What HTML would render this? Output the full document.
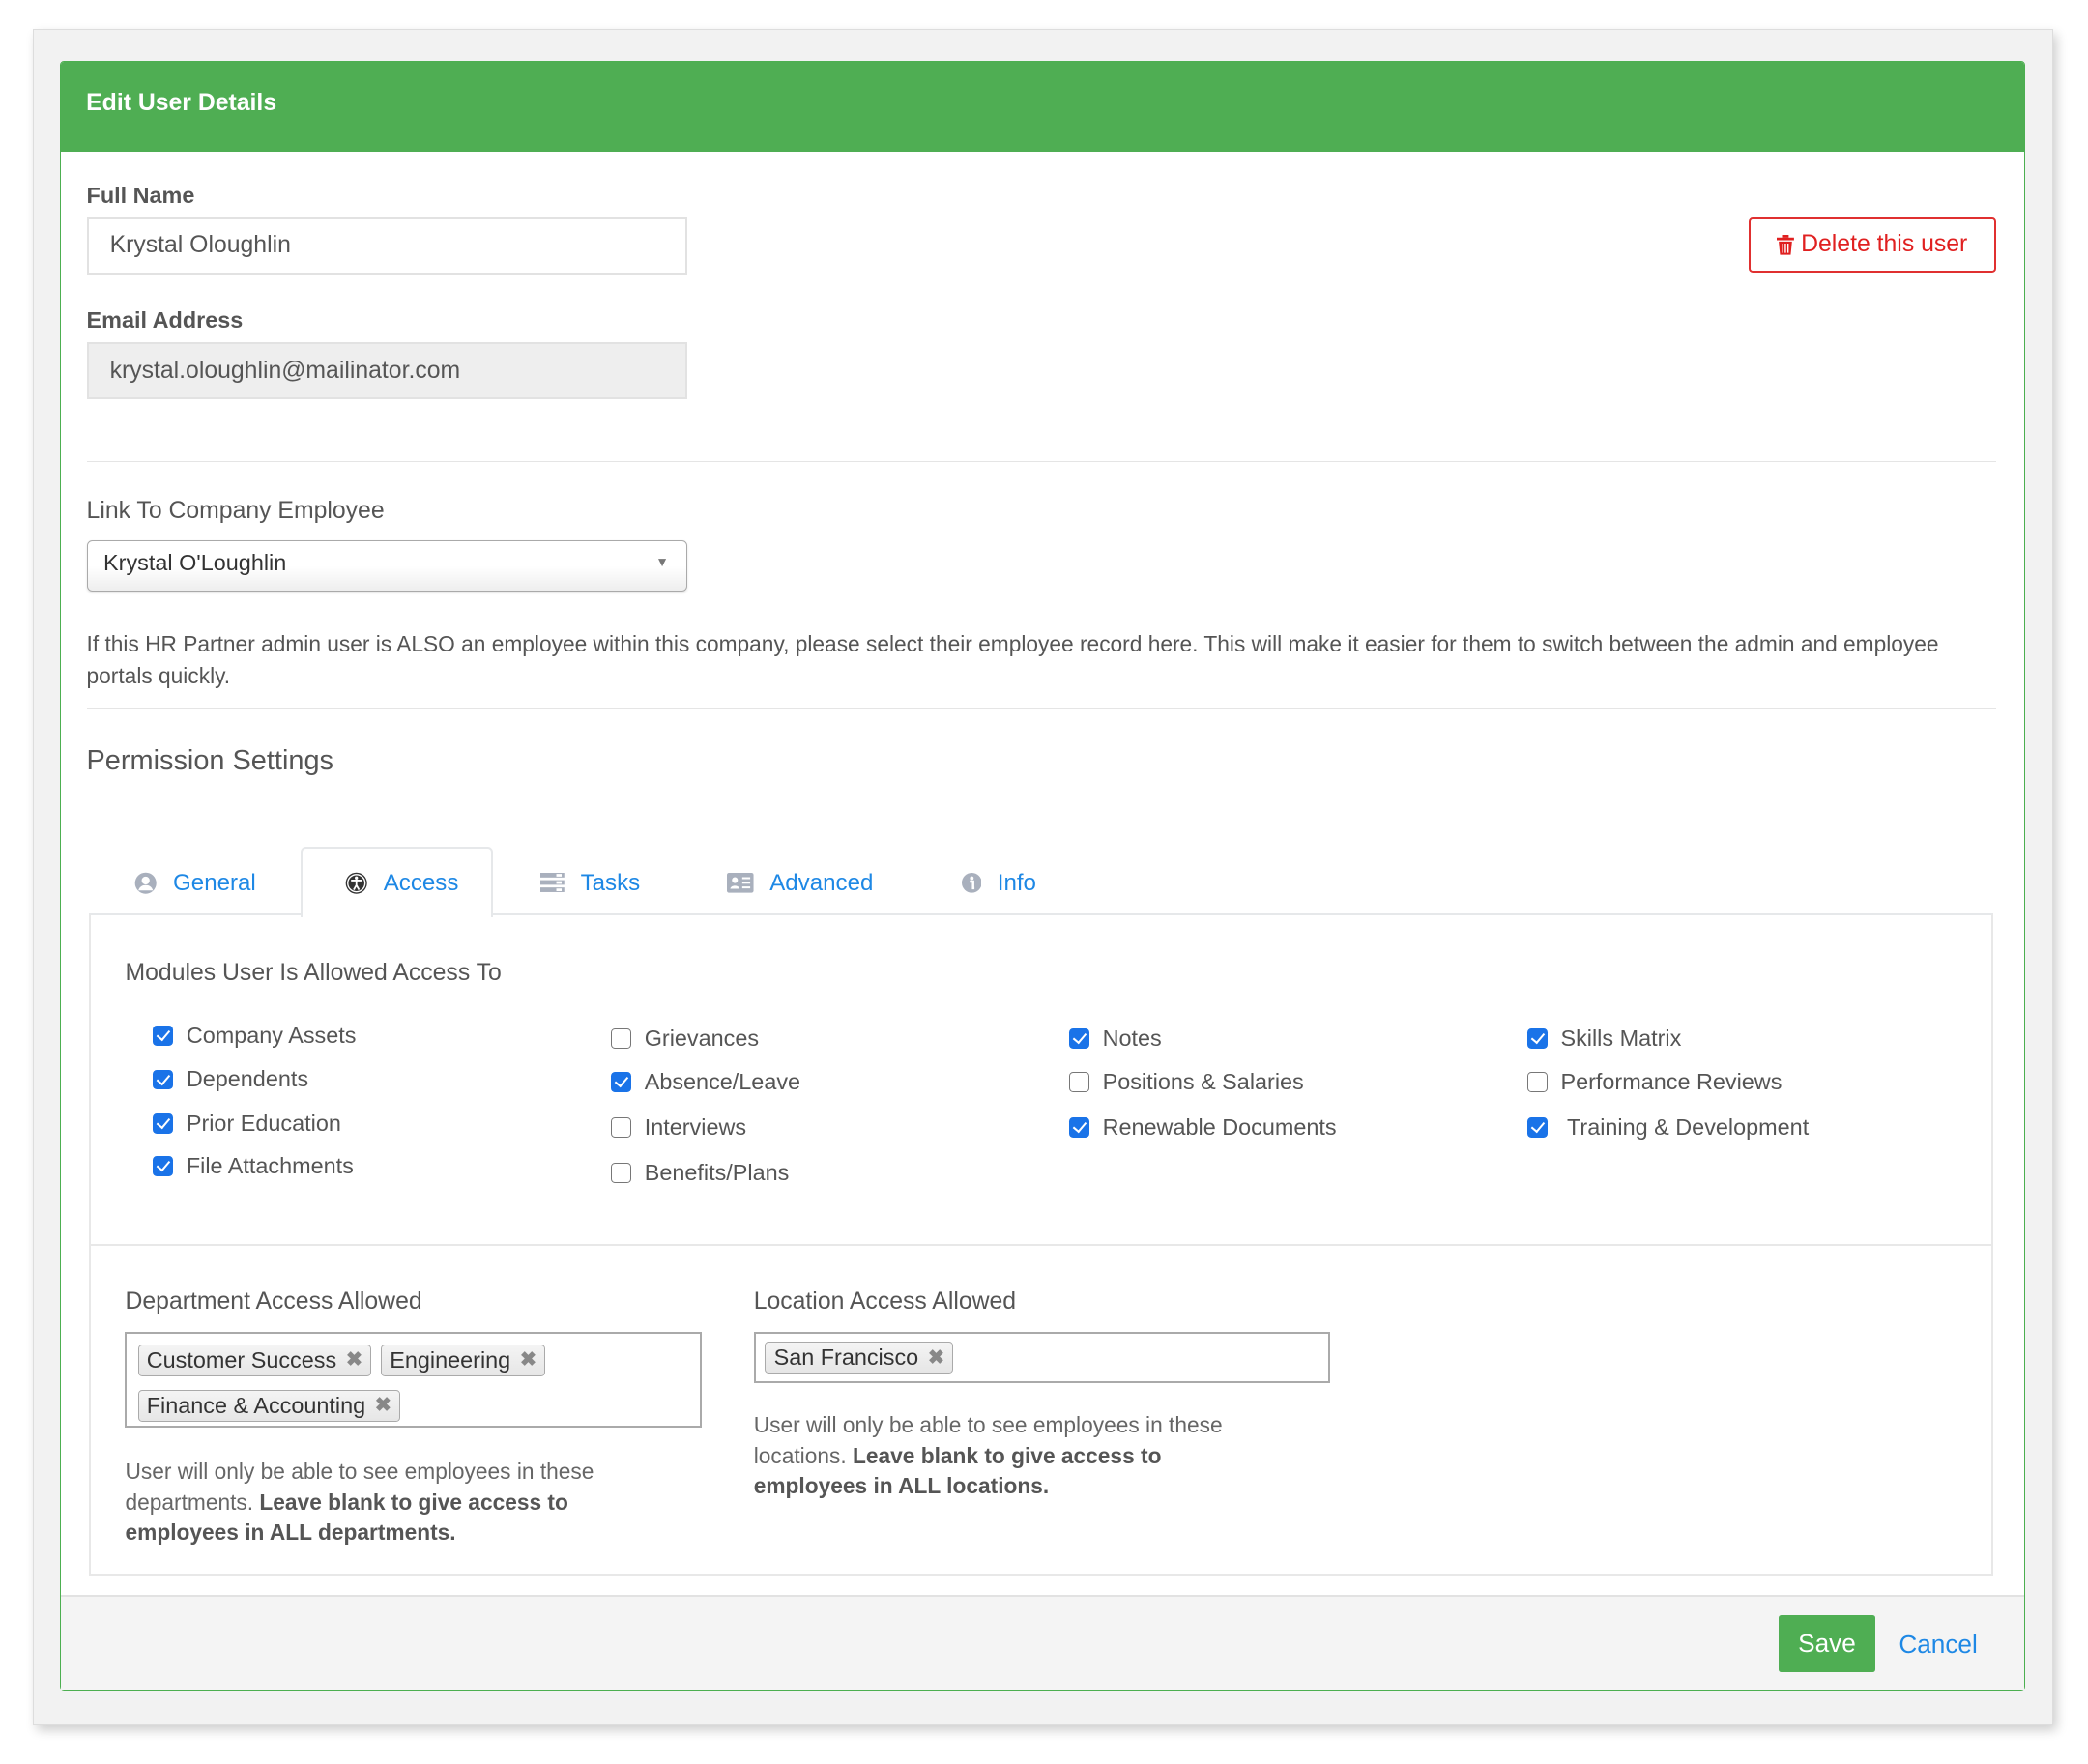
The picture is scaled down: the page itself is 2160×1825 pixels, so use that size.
<!DOCTYPE html>
<html><head><meta charset="utf-8"><style>
*{box-sizing:border-box;margin:0;padding:0}
html,body{width:2160px;height:1825px;background:#fff;overflow:hidden}
#w{zoom:1.37755;width:1568px;height:1325px;position:relative;font-family:"Liberation Sans",sans-serif;color:#555}
.a{position:absolute}
.lbl{font-weight:bold;font-size:17px;color:#555;position:absolute}
.inp{position:absolute;border:1.5px solid #e2e2e2;font-size:18px;color:#555;padding-left:16px;display:flex;align-items:center}
.cb{position:absolute;font-size:17px;color:#555;display:flex;align-items:center;white-space:nowrap}
.cb i{display:inline-block;width:15px;height:15px;border-radius:3px;margin-right:10px;flex:none}
.on{background:#1a73e8;position:relative}
.on:after{content:"";position:absolute;left:5px;top:1.5px;width:4px;height:8px;border:solid #fff;border-width:0 2px 2px 0;transform:rotate(40deg)}
.off{border:1.3px solid #777;background:#fff}
.tab{position:absolute;top:653px;font-size:17.5px;color:#1e88e5;display:flex;align-items:center;gap:12px}
.tag{display:inline-flex;align-items:center;height:24px;padding:0 6px;border:1px solid #aaa;border-radius:3px;background:linear-gradient(#f4f4f4,#e6e6e6);font-size:17px;color:#333;margin-right:7px}
.tag b{color:#888;margin-left:7px;font-size:15px}
.help{position:absolute;font-size:16.5px;line-height:23px;color:#666}
.help strong{color:#555}
</style></head><body><div id="w">
<div class="a" style="left:25px;top:22px;width:1517px;height:1274px;background:#f2f2f2;border:1px solid #ddd;box-shadow:3px 4px 8px rgba(0,0,0,.2)"></div>
<div class="a" style="left:45px;top:46px;width:1476px;height:1224px;background:#fff;border:1px solid #4caf50;border-radius:3px;overflow:hidden">
 <div class="a" style="left:0;top:0;width:100%;height:67px;background:#4fae53;color:#fff;font-weight:bold;font-size:18px;padding:21px 0 0 19px">Edit User Details</div>
</div>
<div class="lbl" style="left:65px;top:137px">Full Name</div>
<div class="inp" style="left:65px;top:163px;width:451px;height:43px">Krystal Oloughlin</div>
<div class="a" style="left:1313px;top:163px;width:186px;height:42px;border:1.5px solid #e03030;border-radius:3px;color:#e02020;font-size:18px;display:flex;align-items:center;justify-content:center;gap:5px">
<svg width="13" height="15" viewBox="0 0 13 15"><rect x="0" y="2" width="13" height="2" fill="#e02020"/><rect x="4" y="0" width="5" height="2" fill="#e02020"/><path d="M1.5 5h10l-1 10h-8z" fill="#e02020"/><path d="M4.5 6.5v7M6.5 6.5v7M8.5 6.5v7" stroke="#fff" stroke-width="1"/></svg>Delete this user</div>
<div class="lbl" style="left:65px;top:231px">Email Address</div>
<div class="inp" style="left:65px;top:257px;width:451px;height:43px;background:#eee">krystal.oloughlin@mailinator.com</div>
<div class="a" style="left:65px;top:346px;width:1434px;height:1px;background:#e5e5e5"></div>
<div class="a" style="left:65px;top:374px;font-size:18px;color:#555">Link To Company Employee</div>
<div class="a" style="left:65px;top:406px;width:451px;height:38px;border:1px solid #aaa;border-radius:4px;background:linear-gradient(#fff 50%,#eee);box-shadow:0 1px 2px rgba(0,0,0,.1);font-size:17px;color:#333;padding:6px 0 0 12px">Krystal O'Loughlin<span class="a" style="right:13px;top:10px;font-size:10px;color:#777">▼</span></div>
<div class="a" style="left:65px;top:472px;width:1400px;font-size:16.5px;line-height:24px;color:#555">If this HR Partner admin user is ALSO an employee within this company, please select their employee record here. This will make it easier for them to switch between the admin and employee portals quickly.</div>
<div class="a" style="left:65px;top:532px;width:1434px;height:1px;background:#e5e5e5"></div>
<div class="a" style="left:65px;top:560px;font-size:21px;color:#555">Permission Settings</div>
<div class="a" style="left:67px;top:686px;width:1430px;height:497px;border:1.5px solid #e8e8e8;border-top:2px solid #e6e8ea"></div>
<div class="a" style="left:226px;top:636px;width:144px;height:53px;background:#fff;border:1.5px solid #e6e8ea;border-bottom:none;border-radius:4px 4px 0 0"></div>
<div class="tab" style="left:101px"><svg width="17" height="17" viewBox="0 0 17 17"><circle cx="8.5" cy="8.5" r="8" fill="#a9b0bd"/><circle cx="8.5" cy="6.5" r="3" fill="#fff"/><path d="M3 14c1-3 3-4 5.5-4s4.5 1 5.5 4" fill="#fff"/></svg>General</div>
<div class="tab" style="left:259px"><svg width="17" height="17" viewBox="0 0 17 17"><circle cx="8.5" cy="8.5" r="8" fill="#333"/><circle cx="8.5" cy="8.5" r="6.5" fill="none" stroke="#fff" stroke-width="1"/><circle cx="8.5" cy="4.6" r="1.2" fill="#fff"/><path d="M4.5 6.5h8M8.5 6.5v3.5l-2 3.5M8.5 10l2 3.5" stroke="#fff" stroke-width="1.3" fill="none"/></svg>Access</div>
<div class="tab" style="left:406px"><svg width="18" height="15" viewBox="0 0 18 15"><rect y="0" width="18" height="3.5" fill="#a9b0bd"/><rect y="5.5" width="18" height="3.5" fill="#a9b0bd"/><rect y="11" width="18" height="3.5" fill="#a9b0bd"/><rect x="12" y="0.8" width="4" height="2" fill="#fff"/><rect x="12" y="6.3" width="4" height="2" fill="#fff"/><rect x="12" y="11.8" width="4" height="2" fill="#fff"/></svg>Tasks</div>
<div class="tab" style="left:546px"><svg width="20" height="15" viewBox="0 0 20 15"><rect width="20" height="15" rx="1.5" fill="#a9b0bd"/><circle cx="6" cy="5.5" r="2.2" fill="#fff"/><path d="M2.5 12c.5-3 6.5-3 7 0z" fill="#fff"/><path d="M11.5 4h6M11.5 7.5h6M11.5 11h6" stroke="#fff" stroke-width="1.4"/></svg>Advanced</div>
<div class="tab" style="left:722px"><svg width="15" height="15" viewBox="0 0 15 15"><circle cx="7.5" cy="7.5" r="7.5" fill="#a9b0bd"/><circle cx="7.5" cy="4" r="1.4" fill="#fff"/><path d="M6 6.5h2.5v5h1" stroke="#fff" stroke-width="1.8" fill="none"/></svg>Info</div>
<div class="a" style="left:94px;top:721px;font-size:18px;color:#555">Modules User Is Allowed Access To</div>
<div class="cb" style="left:115px;top:768px"><i class="on"></i>Company Assets</div>
<div class="cb" style="left:115px;top:801px"><i class="on"></i>Dependents</div>
<div class="cb" style="left:115px;top:834px"><i class="on"></i>Prior Education</div>
<div class="cb" style="left:115px;top:866px"><i class="on"></i>File Attachments</div>
<div class="cb" style="left:459px;top:770px"><i class="off"></i>Grievances</div>
<div class="cb" style="left:459px;top:803px"><i class="on"></i>Absence/Leave</div>
<div class="cb" style="left:459px;top:837px"><i class="off"></i>Interviews</div>
<div class="cb" style="left:459px;top:871px"><i class="off"></i>Benefits/Plans</div>
<div class="cb" style="left:803px;top:770px"><i class="on"></i>Notes</div>
<div class="cb" style="left:803px;top:803px"><i class="off"></i>Positions &amp; Salaries</div>
<div class="cb" style="left:803px;top:837px"><i class="on"></i>Renewable Documents</div>
<div class="cb" style="left:1147px;top:770px"><i class="on"></i>Skills Matrix</div>
<div class="cb" style="left:1147px;top:803px"><i class="off"></i>Performance Reviews</div>
<div class="cb" style="left:1147px;top:837px"><i class="on"></i>&nbsp;Training &amp; Development</div>
<div class="a" style="left:68px;top:934px;width:1428px;height:1.5px;background:#e8e8e8"></div>
<div class="a" style="left:94px;top:968px;font-size:18px;color:#555">Department Access Allowed</div>
<div class="a" style="left:94px;top:1000px;width:433px;height:72px;border:1.5px solid #aaa;padding:4px 0 0 8px;line-height:34px"><span class="tag">Customer Success<b>✖</b></span><span class="tag">Engineering<b>✖</b></span><br><span class="tag">Finance &amp; Accounting<b>✖</b></span></div>
<div class="help" style="left:94px;top:1094px;width:420px">User will only be able to see employees in these departments. <strong>Leave blank to give access to employees in ALL departments.</strong></div>
<div class="a" style="left:566px;top:968px;font-size:18px;color:#555">Location Access Allowed</div>
<div class="a" style="left:566px;top:1000px;width:433px;height:39px;border:1.5px solid #aaa;padding:6px 0 0 7px"><span class="tag">San Francisco<b>✖</b></span></div>
<div class="help" style="left:566px;top:1059px;width:385px">User will only be able to see employees in these locations. <strong>Leave blank to give access to employees in ALL locations.</strong></div>
<div class="a" style="left:46px;top:1198px;width:1474px;height:71px;background:#f4f4f4;border-top:1.5px solid #e2e2e2"></div>
<div class="a" style="left:1336px;top:1213px;width:72px;height:43px;background:#4fae53;border-radius:2px;color:#fff;font-size:19px;display:flex;align-items:center;justify-content:center">Save</div>
<div class="a" style="left:1426px;top:1224px;font-size:19px;color:#1e88e5">Cancel</div>
</div></body></html>
